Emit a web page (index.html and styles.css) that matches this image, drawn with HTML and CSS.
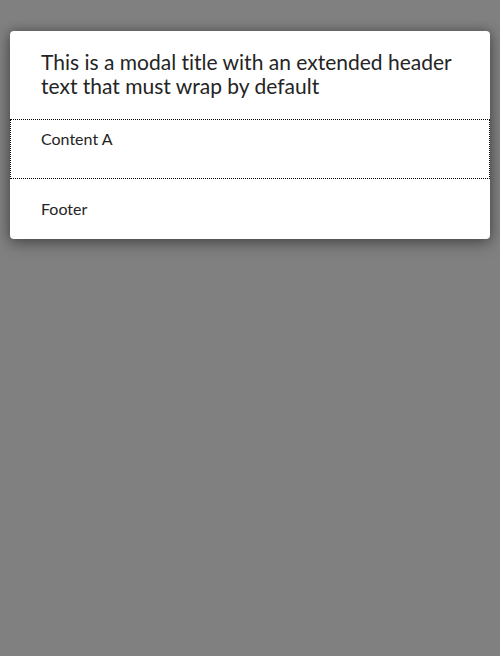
FILE: index.html
```html
<!DOCTYPE html>
<html>
<head>
<meta charset="utf-8">
<link rel="stylesheet" href="styles.css">
</head>
<body>
<div class="overlay">
  <div class="modal">
    <div class="header">This is a modal title with an extended header text that must wrap by default</div>
    <div class="content">Content A</div>
    <div class="footer">Footer</div>
  </div>
</div>
</body>
</html>
```
FILE: styles.css
```css
html, body {
  margin: 0;
  padding: 0;
  height: 100%;
}
body {
  background: #808080;
  font-family: "Segoe UI", Lato, sans-serif;
  font-variant-ligatures: none;
  color: #242424;
}
.overlay {
  padding: 31px 10px 0;
}
.modal {
  background: #fff;
  border-radius: 4px;
  box-shadow: 0 0 12px rgba(0,0,0,0.35), 0 6px 16px rgba(0,0,0,0.25);
  display: flex;
  flex-direction: column;
}
.header {
  padding: 19px 31px 21px;
  font-size: 21px;
  line-height: 24px;
  height: 88px;
  box-sizing: border-box;
}
.content {
  height: 60px;
  box-sizing: border-box;
  padding: 10px 31px;
  font-size: 16px;
  line-height: 20px;
  outline: 1px dotted #000;
  outline-offset: -1px;
}
.footer {
  height: 60px;
  box-sizing: border-box;
  padding: 20px 31px;
  font-size: 16px;
  line-height: 20px;
}
```
